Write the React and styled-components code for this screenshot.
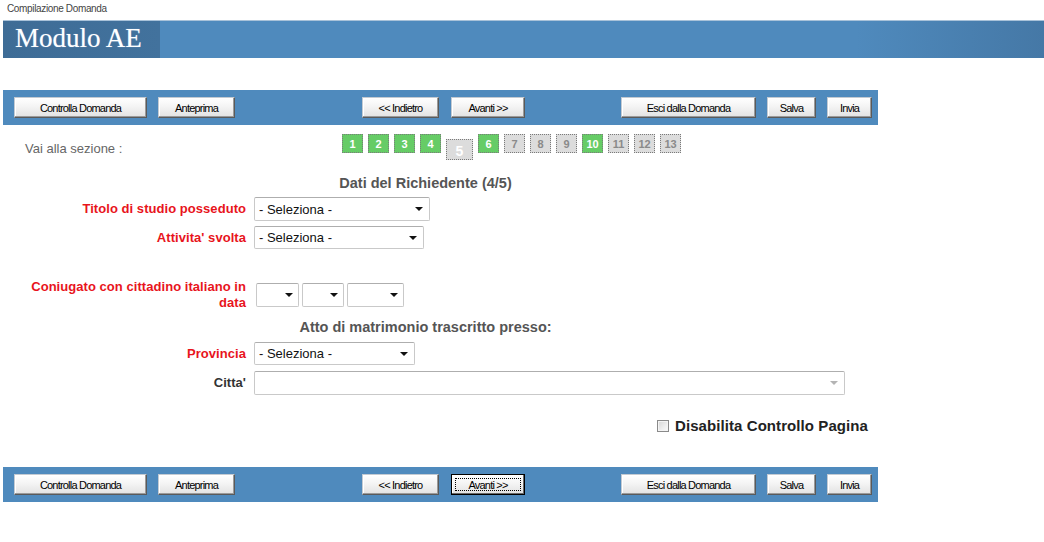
import React from 'react';
import styled, { createGlobalStyle, css } from 'styled-components';

const GlobalStyle = createGlobalStyle`
  html, body { margin: 0; padding: 0; background: #fff; }
  body { font-family: "Liberation Sans", Arial, sans-serif; }
  * { box-sizing: border-box; }
`;

const Page = styled.div`
  padding-left: 3px;
  width: 1044px;
`;

const Breadcrumb = styled.div`
  height: 20px;
  padding-left: 4px;
  font-size: 10px;
  letter-spacing: -0.35px;
  line-height: 17px;
  color: #444;
`;

const HeaderBar = styled.header`
  display: flex;
  height: 38px;
  border-top: 1px solid #a9c2d9;
  background: linear-gradient(to right, #4f8abd 0%, #4f8abd 82%, #4578a6 100%);
`;

const HeaderTitle = styled.h1`
  margin: 0;
  width: 157px;
  padding-left: 12px;
  background: linear-gradient(to right, #3e6c96, #42729d);
  color: #fff;
  font-family: "Liberation Serif", "Times New Roman", serif;
  font-weight: normal;
  font-size: 27px;
  line-height: 34px;
  text-shadow: 0 0 1px rgba(200, 225, 255, 0.6);
`;

const Toolbar = styled.div`
  display: flex;
  align-items: flex-start;
  width: 875px;
  height: 35px;
  margin-top: ${p => p.$mt}px;
  padding: 7px 6px 0 11px;
  background: #4f8abd;
`;

const ButtonGroup = styled.div`
  display: flex;
  gap: ${p => p.$gap || 11}px;
  margin-left: ${p => (p.$auto ? 'auto' : `${p.$ml || 0}px`)};
`;

const Button = styled.button`
  position: relative;
  width: ${p => p.$w}px;
  height: 21px;
  padding: 0;
  font-family: "Liberation Sans", Arial, sans-serif;
  font-size: 11px;
  letter-spacing: -0.8px;
  color: #000;
  background: linear-gradient(to bottom, #ffffff 0%, #f4f4f4 45%, #e2e2e2 100%);
  border: 1px solid;
  border-color: #c3cad2 #5a5a5a #5a5a5a #c3cad2;
  box-shadow: inset -1px -1px 0 #9a9a9a, inset 1px 1px 0 #ffffff;
  cursor: pointer;
  ${p => p.$focused && css`
    border-color: #000;
    box-shadow: inset -1px -1px 0 #6a6a6a, inset 1px 1px 0 #ffffff;
    &::after {
      content: '';
      position: absolute;
      inset: 3px;
      border: 1px dotted #000;
    }
  `}
`;

const NavRow = styled.nav`
  display: flex;
  align-items: flex-start;
  margin-top: 9px;
  width: 875px;
`;

const NavLabel = styled.div`
  width: 339px;
  padding: 7px 0 0 22px;
  font-size: 13px;
  line-height: 15px;
  color: #666;
`;

const Steps = styled.div`
  display: flex;
  align-items: flex-start;
  gap: 5px;
`;

const Step = styled.span`
  display: flex;
  align-items: center;
  justify-content: center;
  width: ${p => (p.$current ? 27 : 21)}px;
  height: ${p => (p.$current ? 21 : 19)}px;
  margin-top: ${p => (p.$current ? 5 : 0)}px;
  border: 1px dotted #7a7a7a;
  background: ${p => (p.$done ? '#66cc66' : '#dcdcdc')};
  color: ${p => (p.$done || p.$current ? '#fff' : '#8a8a8a')};
  font-weight: bold;
  font-size: ${p => (p.$current ? 14 : 11)}px;
  ${p => p.$current && css`padding-top: 3px;`}
`;

const Form = styled.div`
  width: 845px;
`;

const SectionTitle = styled.div`
  margin-top: ${p => p.$mt}px;
  text-align: center;
  font-weight: bold;
  font-size: 14.5px;
  line-height: 18px;
  color: #555;
`;

const Row = styled.div`
  display: grid;
  grid-template-columns: 251px 1fr;
  align-items: center;
  margin-top: ${p => p.$mt}px;
`;

const Label = styled.label`
  padding-right: 8px;
  text-align: right;
  font-weight: bold;
  font-size: 13px;
  line-height: 16px;
  letter-spacing: 0.05px;
  color: ${p => (p.$required ? '#e8141c' : '#333')};
`;

const SelectWrap = styled.div`
  position: relative;
  width: ${p => p.$w}px;
  height: ${p => p.$h || 24}px;
  border: 1px solid #c9c9c9;
  border-top-color: #aeaeae;
  border-radius: 2px;
  background: #fff;
  &::after {
    content: '';
    position: absolute;
    right: ${p => p.$ar || 6}px;
    top: 50%;
    margin-top: -2px;
    border-left: 4px solid transparent;
    border-right: 4px solid transparent;
    border-top: 4px solid ${p => p.$arrow || '#111'};
    pointer-events: none;
  }
`;

const Select = styled.select`
  appearance: none;
  -webkit-appearance: none;
  width: 100%;
  height: 100%;
  border: none;
  outline: none;
  background: transparent;
  padding: 0 0 0 4px;
  font-family: "Liberation Sans", Arial, sans-serif;
  font-size: 13px;
  color: #111;
`;

const TextInput = styled.input`
  width: 100%;
  height: 100%;
  border: none;
  outline: none;
  background: transparent;
  padding: 0 20px 0 4px;
  font-family: "Liberation Sans", Arial, sans-serif;
  font-size: 13px;
`;

const DateGroup = styled.div`
  display: flex;
  gap: 3px;
  margin-left: 2px;
`;

const CheckRow = styled.div`
  display: flex;
  align-items: center;
  justify-content: flex-end;
  gap: 6px;
  width: 875px;
  margin-top: 22px;
  padding-right: 10px;
`;

const Checkbox = styled.input.attrs({ type: 'checkbox' })`
  appearance: none;
  -webkit-appearance: none;
  margin: 0;
  width: 12px;
  height: 12px;
  border: 1px solid #8a8a8a;
  background: linear-gradient(135deg, #d6d6d6 0%, #eeeeee 60%, #fafafa 100%);
  box-shadow: inset 0 0 0 1px #f4f4f4;
`;

const CheckLabel = styled.label`
  font-weight: bold;
  font-size: 15px;
  line-height: 18px;
  letter-spacing: 0.08px;
  color: #222;
`;

function Bar({ mt, focusNext }) {
  return (
    <Toolbar $mt={mt}>
      <ButtonGroup>
        <Button $w={133}>Controlla Domanda</Button>
        <Button $w={77}>Anteprima</Button>
      </ButtonGroup>
      <ButtonGroup $ml={127} $gap={12}>
        <Button $w={77}>&lt;&lt; Indietro</Button>
        <Button $w={74} $focused={focusNext}>Avanti &gt;&gt;</Button>
      </ButtonGroup>
      <ButtonGroup $auto>
        <Button $w={135}>Esci dalla Domanda</Button>
        <Button $w={49}>Salva</Button>
        <Button $w={45}>Invia</Button>
      </ButtonGroup>
    </Toolbar>
  );
}

const steps = [
  { n: 1, done: true }, { n: 2, done: true }, { n: 3, done: true }, { n: 4, done: true },
  { n: 5, current: true }, { n: 6, done: true }, { n: 7 }, { n: 8 }, { n: 9 },
  { n: 10, done: true }, { n: 11 }, { n: 12 }, { n: 13 },
];

function Sel({ w, h }) {
  return (
    <SelectWrap $w={w} $h={h}>
      <Select defaultValue="">
        <option value="">- Seleziona -</option>
      </Select>
    </SelectWrap>
  );
}

function DateSel({ w }) {
  return (
    <SelectWrap $w={w} $h={24} $ar={5}>
      <Select defaultValue="">
        <option value=""></option>
      </Select>
    </SelectWrap>
  );
}

export default function App() {
  return (
    <>
      <GlobalStyle />
      <Page>
        <Breadcrumb>Compilazione Domanda</Breadcrumb>
        <HeaderBar>
          <HeaderTitle>Modulo AE</HeaderTitle>
        </HeaderBar>

        <Bar mt={32} />

        <NavRow>
          <NavLabel>Vai alla sezione :</NavLabel>
          <Steps>
            {steps.map(s => (
              <Step key={s.n} $done={s.done} $current={s.current}>{s.n}</Step>
            ))}
          </Steps>
        </NavRow>

        <Form>
          <SectionTitle $mt={14}>Dati del Richiedente (4/5)</SectionTitle>
          <Row $mt={5}>
            <Label $required>Titolo di studio posseduto</Label>
            <Sel w={176} h={24} />
          </Row>
          <Row $mt={5}>
            <Label $required>Attivita' svolta</Label>
            <Sel w={170} h={23} />
          </Row>
          <Row $mt={30}>
            <Label $required>Coniugato con cittadino italiano in data</Label>
            <DateGroup>
              <DateSel w={43} />
              <DateSel w={42} />
              <DateSel w={57} />
            </DateGroup>
          </Row>
          <SectionTitle $mt={7}>Atto di matrimonio trascritto presso:</SectionTitle>
          <Row $mt={6}>
            <Label $required>Provincia</Label>
            <Sel w={161} h={23} />
          </Row>
          <Row $mt={6}>
            <Label>Citta'</Label>
            <SelectWrap $w={591} $h={24} $arrow="#b4b4b4">
              <TextInput type="text" />
            </SelectWrap>
          </Row>
        </Form>

        <CheckRow>
          <Checkbox id="dis" />
          <CheckLabel htmlFor="dis">Disabilita Controllo Pagina</CheckLabel>
        </CheckRow>

        <Bar mt={32} focusNext />
      </Page>
    </>
  );
}
